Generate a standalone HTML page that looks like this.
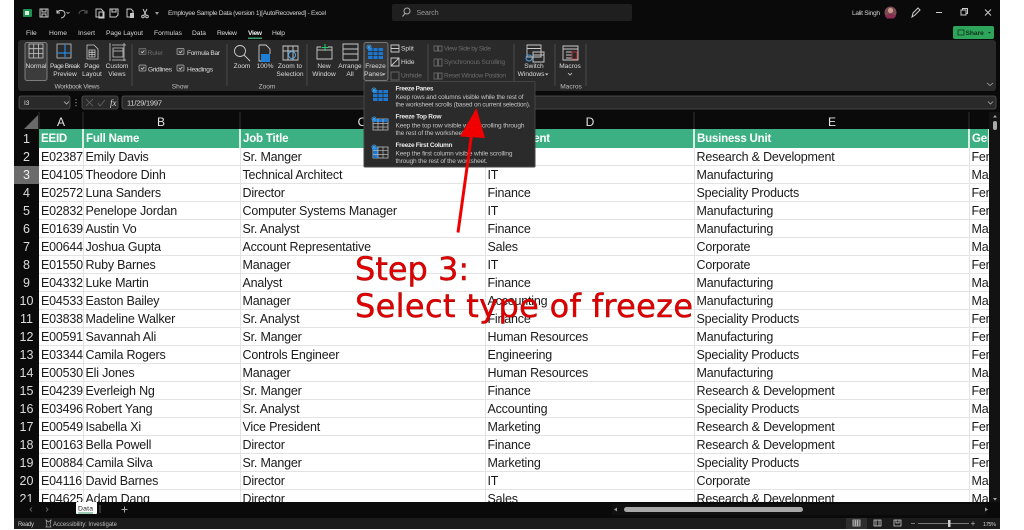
<!DOCTYPE html>
<html><head><meta charset="utf-8"><style>
html,body{margin:0;padding:0;background:#fff;width:1024px;height:530px;overflow:hidden}
#win{position:absolute;left:14px;top:0;width:986px;height:529px;background:#0a0a0a}
#grid{position:absolute;left:14px;top:129px;width:975px;height:373px;overflow:hidden;background:#fff}
table{border-collapse:collapse;table-layout:fixed;width:975px;font:12.5px "Liberation Sans",sans-serif;letter-spacing:-.2px;color:#1a1a1a}
td{height:16px;padding:1px 0 0 2px;border-right:1px solid #e3e3e3;border-bottom:1px solid #e3e3e3;white-space:nowrap;overflow:hidden;line-height:16px;box-sizing:content-box}
td:first-child{background:#0a0a0a;color:#ddd;text-align:center;padding:1px 0 0;border:0;letter-spacing:0}
tr.h td{height:18px;background:#3cb083;color:#fff;font-weight:bold;font-size:11.5px;border-right:2px solid #d8efe6;border-bottom:0}
tr.h td:first-child{background:#0a0a0a;color:#ddd;font-weight:normal;font-size:12.5px;border:0}
tr.s td:first-child{background:#6b6b6b;color:#eee}
svg{position:absolute;left:0;top:0}
text{font-family:"Liberation Sans",sans-serif}
</style></head><body>
<div id="win"></div>
<div id="grid"><table>
<colgroup><col style="width:25px"><col style="width:44px"><col style="width:157px"><col style="width:245px"><col style="width:209px"><col style="width:275px"><col style="width:20px"></colgroup>
<tr class="h"><td>1</td><td>EEID</td><td>Full Name</td><td>Job Title</td><td>Department</td><td>Business Unit</td><td>Gender</td></tr>
<tr><td>2</td><td>E02387</td><td>Emily Davis</td><td>Sr. Manger</td><td>IT</td><td>Research &amp; Development</td><td>Female</td></tr>
<tr class="s"><td>3</td><td>E04105</td><td>Theodore Dinh</td><td>Technical Architect</td><td>IT</td><td>Manufacturing</td><td>Male</td></tr>
<tr><td>4</td><td>E02572</td><td>Luna Sanders</td><td>Director</td><td>Finance</td><td>Speciality Products</td><td>Female</td></tr>
<tr><td>5</td><td>E02832</td><td>Penelope Jordan</td><td>Computer Systems Manager</td><td>IT</td><td>Manufacturing</td><td>Female</td></tr>
<tr><td>6</td><td>E01639</td><td>Austin Vo</td><td>Sr. Analyst</td><td>Finance</td><td>Manufacturing</td><td>Male</td></tr>
<tr><td>7</td><td>E00644</td><td>Joshua Gupta</td><td>Account Representative</td><td>Sales</td><td>Corporate</td><td>Male</td></tr>
<tr><td>8</td><td>E01550</td><td>Ruby Barnes</td><td>Manager</td><td>IT</td><td>Corporate</td><td>Female</td></tr>
<tr><td>9</td><td>E04332</td><td>Luke Martin</td><td>Analyst</td><td>Finance</td><td>Manufacturing</td><td>Male</td></tr>
<tr><td>10</td><td>E04533</td><td>Easton Bailey</td><td>Manager</td><td>Accounting</td><td>Manufacturing</td><td>Male</td></tr>
<tr><td>11</td><td>E03838</td><td>Madeline Walker</td><td>Sr. Analyst</td><td>Finance</td><td>Speciality Products</td><td>Female</td></tr>
<tr><td>12</td><td>E00591</td><td>Savannah Ali</td><td>Sr. Manger</td><td>Human Resources</td><td>Manufacturing</td><td>Female</td></tr>
<tr><td>13</td><td>E03344</td><td>Camila Rogers</td><td>Controls Engineer</td><td>Engineering</td><td>Speciality Products</td><td>Female</td></tr>
<tr><td>14</td><td>E00530</td><td>Eli Jones</td><td>Manager</td><td>Human Resources</td><td>Manufacturing</td><td>Male</td></tr>
<tr><td>15</td><td>E04239</td><td>Everleigh Ng</td><td>Sr. Manger</td><td>Finance</td><td>Research &amp; Development</td><td>Female</td></tr>
<tr><td>16</td><td>E03496</td><td>Robert Yang</td><td>Sr. Analyst</td><td>Accounting</td><td>Speciality Products</td><td>Male</td></tr>
<tr><td>17</td><td>E00549</td><td>Isabella Xi</td><td>Vice President</td><td>Marketing</td><td>Research &amp; Development</td><td>Female</td></tr>
<tr><td>18</td><td>E00163</td><td>Bella Powell</td><td>Director</td><td>Finance</td><td>Research &amp; Development</td><td>Female</td></tr>
<tr><td>19</td><td>E00884</td><td>Camila Silva</td><td>Sr. Manger</td><td>Marketing</td><td>Speciality Products</td><td>Female</td></tr>
<tr><td>20</td><td>E04116</td><td>David Barnes</td><td>Director</td><td>IT</td><td>Corporate</td><td>Male</td></tr>
<tr><td>21</td><td>E04625</td><td>Adam Dang</td><td>Director</td><td>Sales</td><td>Research &amp; Development</td><td>Male</td></tr>
</table></div>

<svg width="1024" height="530" viewBox="0 0 1024 530">
<!-- title bar -->
<rect x="23" y="9" width="9" height="8" rx="1" fill="#1f8f52"/><rect x="25" y="11" width="4" height="4" fill="#d8f0e0"/>
<g fill="none" stroke="#c8c8c8" stroke-width="1">
<rect x="40" y="9" width="8" height="8"/><path d="M42 9v3h4V9M42 17v-3h4v3"/>
<path d="M57 10v3h3M57 13c2-4 8-3 8 1 0 2-2 4-4 4" />
<path d="M66.500 12l1.500 1.500L69.500 12" stroke-width=".7"/>
<path d="M87 10v3h-3M87 13c-2-4-8-3-8 1" stroke="#555"/>
<path d="M96 9h5l2 2v6h-7z M99 12h5v6h-5z"/>
<path d="M110 9h8v6l-2 2h-6z M112 9v3h4V9"/>
<path d="M127 9h4l2 2v6h-6z"/><rect x="130" y="13" width="4" height="5" fill="#c8c8c8" stroke="none"/>
<path d="M143 9l3 6M147 9l-3 6"/><circle cx="143" cy="16.500" r="1.300"/><circle cx="147" cy="16.500" r="1.300"/>
</g>
<path d="M155 12h4l-2 3z" fill="#999"/>
<text x="168" y="15" font-size="6.600" fill="#d2d2d2" textLength="158">Employee Sample Data (version 1)[AutoRecovered]  -  Excel</text>
<rect x="392" y="4" width="240" height="17" rx="2" fill="#1f1f1f"/>
<circle cx="407" cy="11" r="3" fill="none" stroke="#aaa"/><path d="M405 13.500l-2.500 3" stroke="#aaa"/>
<text x="416.500" y="15" font-size="7" fill="#9a9a9a">Search</text>
<text x="852" y="15" font-size="6.600" fill="#d2d2d2" textLength="28">Lalit Singh</text>
<circle cx="890.500" cy="12.500" r="6" fill="#7c4a52"/><circle cx="890.500" cy="10.500" r="2.600" fill="#c79c8c"/><path d="M885 16q5.500-4 11 0l-2 2.500h-7z" fill="#8a2c50"/>
<path d="M912 17l1-4 5-5 2 2-5 5-3 2z" fill="none" stroke="#ccc"/>
<path d="M936 12.500h6" stroke="#ccc"/>
<path d="M961 10h5v5h-5zM962.500 10V8.500h5v5H966" fill="none" stroke="#ccc"/>
<path d="M985 9.500l6 6M991 9.500l-6 6" stroke="#ccc" stroke-width="1"/>
<!-- tabs -->
<g font-size="6.700" fill="#d6d6d6">
<text x="26" y="35">File</text><text x="49" y="35" textLength="18">Home</text><text x="78" y="35" textLength="17">Insert</text>
<text x="106" y="35" textLength="37">Page Layout</text><text x="154" y="35" textLength="28">Formulas</text><text x="192" y="35" textLength="14">Data</text>
<text x="217" y="35" textLength="20">Review</text><text x="248" y="35" textLength="14" font-weight="bold" fill="#eee">View</text><text x="272" y="35" textLength="13">Help</text>
</g>
<rect x="248" y="37.500" width="14" height="1.500" fill="#3a9a6a"/>
<rect x="953" y="26" width="41" height="13" rx="2" fill="#2ea55a"/>
<rect x="958" y="30" width="6" height="5" fill="none" stroke="#0e3a20" stroke-width=".8"/>
<text x="965.500" y="35" font-size="6.600" fill="#0e2e1c" font-weight="bold">Share</text>
<path d="M988 32h3l-1.500 1.500z" fill="#0e2e1c"/>
<!-- ribbon -->
<rect x="18" y="40" width="978" height="51" rx="3" fill="#2a2a2a"/>
<rect x="25" y="42.500" width="22" height="38" rx="2" fill="#3c3c3c" stroke="#7e7e7e"/>
<rect x="364" y="42.500" width="24" height="38" rx="2" fill="#383838" stroke="#777"/>
<g stroke="#4a4a4a" stroke-width="1"><path d="M132 44v42M227 44v42M307 44v42M428 44v42M514 44v42M555 44v42M586 44v42"/></g>
<g fill="none" stroke="#c9c9c9" stroke-width=".8">
<path d="M29 44h14v14H29zM29 48.700h14M29 53.400h14M33.700 44v14M38.400 44v14"/>
<path d="M57 44h14v14H57z" />
<path d="M87 45h7l4 4v10H87z M89 50h6v7h-6zM89 52.300h6M89 54.600h6M92 50v7"/>
<path d="M110 43v18M124 43v18M112 45h14M112 60h14M113 48h10v9h-10zM113 51h10"/>
</g>
<path d="M57 53h14M65 44v14" stroke="#2b87d8" stroke-width="1.200"/>
<g font-size="6.600" fill="#dcdcdc" text-anchor="middle">
<text x="36" y="68" textLength="21">Normal</text>
<text x="65" y="68" textLength="30">Page Break</text><text x="65" y="76">Preview</text>
<text x="92" y="68">Page</text><text x="92" y="76">Layout</text>
<text x="117" y="68">Custom</text><text x="117" y="76">Views</text>
<text x="77" y="88.500" textLength="45" fill="#bdbdbd">Workbook Views</text>
<text x="180" y="88.500" fill="#bdbdbd">Show</text>
<text x="242" y="68">Zoom</text><text x="265" y="68">100%</text>
<text x="290" y="68">Zoom to</text><text x="290" y="76">Selection</text>
<text x="267" y="88.500" fill="#bdbdbd">Zoom</text>
<text x="324" y="68">New</text><text x="324" y="76">Window</text>
<text x="350" y="68">Arrange</text><text x="350" y="76">All</text>
<text x="375.500" y="68">Freeze</text><text x="373.500" y="76">Panes</text>
<text x="534" y="68">Switch</text><text x="531" y="76">Windows</text>
<text x="570" y="68">Macros</text>
<text x="571" y="88.500" fill="#bdbdbd">Macros</text>
</g>
<path d="M382 73.500h3.500l-1.750 2z M545 73.500h3.500l-1.750 2z" fill="#ccc"/>
<path d="M568 73l2 2 2-2" fill="none" stroke="#ccc" stroke-width=".8"/>
<!-- checkboxes -->
<g fill="#3a3a3a" stroke="#777" stroke-width=".7">
<rect x="139" y="48.500" width="7" height="6" rx="1"/><rect x="177" y="48.500" width="7" height="6" rx="1" stroke="#aaa"/>
<rect x="139" y="65" width="7" height="6" rx="1" stroke="#aaa"/><rect x="177" y="65" width="7" height="6" rx="1" stroke="#aaa"/>
</g>
<path d="M141 51.500l1.300 1.300 2-2.300M179 51.500l1.300 1.300 2-2.300M141 68l1.300 1.300 2-2.300M179 68l1.300 1.300 2-2.300" fill="none" stroke="#ddd" stroke-width=".7"/>
<g font-size="6.600" fill="#dcdcdc">
<text x="147.500" y="55" fill="#6e6e6e">Ruler</text><text x="187" y="55" textLength="33">Formula Bar</text>
<text x="148" y="71.500" textLength="24">Gridlines</text><text x="187" y="71.500" textLength="26">Headings</text>
<text x="401" y="50.500">Split</text><text x="401" y="64">Hide</text><text x="401" y="77.500" fill="#777">Unhide</text>
<g fill="#6a6a6a"><text x="444" y="50.500" textLength="47">View Side by Side</text><text x="444" y="64" textLength="61">Synchronous Scrolling</text><text x="444" y="77.500" textLength="62">Reset Window Position</text></g>
</g>
<!-- zoom icons -->
<g fill="none" stroke="#c9c9c9" stroke-width=".9">
<circle cx="240" cy="51" r="5.500"/><path d="M244 55l6 6"/>
<path d="M259 45h7l4 4v5M259 45v16h2"/>
<path d="M283 46h15v14h-15zM283 51h15M288 46v14M293 46v14"/>
<path d="M321 47h-4v12h15V47h-4" /><path d="M317 50h15"/>
<path d="M343 44h15v5h-15zM343 49h15v5h-15zM343 54h15v6h-15z"/>
<path d="M391 45h8v7h-8zM391 48.500h8"/><path d="M391 58h8v8h-8zM391 66l8-8"/><path d="M391 72h8v8h-8z" stroke="#666"/>
<path d="M434 46h3.500v5H434zM438.500 46h3.500v5h-3.500z" stroke="#666"/><path d="M434 59h3.500v7H434zM438.500 59h3.500v7h-3.500z" stroke="#666"/><path d="M434 73h3.500v6H434zM438.500 73h3.500v6h-3.500z" stroke="#666"/>
<path d="M527 45h14v12h-14zM527 48.500h14M533 52h11v10h-11zM533 55h11"/>
<path d="M563 46h15v14h-15zM563 49h15M566 52h6M566 55h6M566 58h6"/>
</g>
<rect x="261" y="54" width="9" height="8" fill="#1f7fd6"/><circle cx="292" cy="55" r="3.500" fill="none" stroke="#4ea3e6"/>
<path d="M325 44v7M321.500 47.500h7" stroke="#2ecc71" stroke-width="1"/>
<rect x="572" y="52" width="5" height="7" fill="none" stroke="#b03030"/>
<circle cx="529" cy="58" r="3" fill="none" stroke="#4ea3e6"/>
<path d="M987 83l3 2.500 3-2.500" fill="none" stroke="#aaa" stroke-width=".8"/>
<!-- freeze icon -->
<g id="fz">
<rect x="368" y="48" width="15" height="11" fill="#1e78d0"/><path d="M368 51.700h15M368 55.400h15M373 48v11M378 48v11" stroke="#2a2a2a" stroke-width=".8"/>
<path d="M369 44v6M366 47h6M367 45l4 4M371 45l-4 4" stroke="#39a0f0" stroke-width=".7"/>
</g>
<!-- formula bar -->
<g fill="#2a2a2a" stroke="#555" stroke-width=".8">
<rect x="19" y="96" width="51" height="13" rx="2"/><rect x="82" y="96" width="36" height="13" rx="2"/><rect x="122" y="96" width="874" height="13" rx="2"/>
</g>
<text x="24" y="105" font-size="6.500" fill="#ddd">I3</text>
<path d="M64 101.500l2.500 2.500 2.500-2.500" fill="none" stroke="#bbb" stroke-width=".8"/>
<path d="M76 99v1.300M76 102v1.300M76 105v1.300" stroke="#999"/>
<path d="M86 99l7 7M93 99l-7 7M98 103l2 3 5-6" fill="none" stroke="#666" stroke-width=".8"/>
<text x="110" y="106" font-size="9" fill="#ddd" font-style="italic" style="font-family:'Liberation Serif',serif">fx</text>
<text x="127" y="105.500" font-size="7.500" fill="#ddd" textLength="35">11/29/1997</text>
<path d="M988 101.500l2.500 2.500 2.500-2.500" fill="none" stroke="#aaa" stroke-width=".8"/>
<!-- col headers -->
<rect x="14" y="112" width="975" height="17" fill="#0a0a0a"/>
<path d="M38 115v14H24z" fill="#6a6a6a"/>
<g stroke="#333" stroke-width="1"><path d="M39 112v17M83 112v17M240 112v17M485 112v17M694 112v17M969 112v17"/></g>
<g font-size="12" fill="#e2e2e2" text-anchor="middle">
<text x="61" y="126">A</text><text x="161" y="126">B</text><text x="362" y="126">C</text><text x="590" y="126">D</text><text x="832" y="126">E</text>
</g>
<!-- scrollbars -->
<rect x="989" y="112" width="11" height="390" fill="#121212"/>
<rect x="993" y="121" width="4" height="9" rx="2" fill="#aaa"/>
<path d="M995 115l2 2.500h-4z M995 500.500l2-2.500h-4z" fill="#aaa"/>
<rect x="14" y="502" width="986" height="16" fill="#0a0a0a"/>
<rect x="76" y="502" width="21" height="12" rx="1" fill="#fff"/>
<text x="78" y="510.500" font-size="6.800" fill="#222" textLength="15">Data</text>
<rect x="78" y="512.500" width="15" height="1" fill="#3a9a6a"/>
<path d="M32 507.500l-2 2 2 2M46 507.500l2 2-2 2" fill="none" stroke="#777" stroke-width=".8"/>
<path d="M100 505v8" stroke="#555"/>
<path d="M124.500 506.500v6M121.500 509.500h6" stroke="#aaa"/>
<rect x="612" y="504" width="375" height="11" fill="#101010"/>
<rect x="624" y="507" width="179" height="5" rx="2.500" fill="#a8a8a8"/>
<path d="M985 507.500l3 2-3 2z M614 509.500l3-2v4z" fill="#999"/>
<!-- status bar -->
<rect x="14" y="518" width="986" height="11" fill="#1b1b1b"/>
<rect x="846" y="518" width="21" height="11" fill="#2e2e2e"/>
<text x="18" y="526" font-size="6" fill="#ccc" textLength="16">Ready</text>
<path d="M46 520l2.500 2 2.500-2-1 5 1 2h-5l1-2z" fill="none" stroke="#aaa" stroke-width=".7"/>
<text x="53" y="526" font-size="6" fill="#bbb" textLength="64">Accessibility: Investigate</text>
<g fill="none" stroke="#ccc" stroke-width=".8">
<path d="M853 520h7v6h-7zM853 522h7M853 524h7M855.300 520v6M857.600 520v6"/>
<path d="M874 520h7v6h-7zM876 520v6M879 520v6"/>
<path d="M894 520h7v6h-7zM896 520v3h3v-3"/>
</g>
<path d="M911 523.500h4M918 523.500h51M971 523.500h4M973 521.500v4" stroke="#999" stroke-width=".8"/>
<rect x="948" y="520" width="2.500" height="7" fill="#ccc"/>
<text x="983" y="526" font-size="5.500" fill="#ccc" textLength="13">175%</text>
<!-- menu -->
<rect x="364" y="81.500" width="171" height="85.500" rx="1" fill="#2b2b2b" stroke="#444"/>
<g>
<rect x="373" y="90" width="15" height="11" fill="#1e78d0"/><path d="M373 93.700h15M373 97.400h15M378 90v11M383 90v11" stroke="#2b2b2b" stroke-width=".8"/>
<path d="M374 87v6M371 90h6M372 88l4 4M376 88l-4 4" stroke="#39a0f0" stroke-width=".7"/>
<rect x="373" y="119" width="15" height="11" fill="none" stroke="#bbb" stroke-width=".8"/><rect x="373" y="119" width="15" height="3" fill="#1e78d0"/><path d="M373 123.500h15M373 127h15M378 119v11M383 119v11" stroke="#bbb" stroke-width=".7"/>
<path d="M374 116v6M371 119h6M372 117l4 4M376 117l-4 4" stroke="#39a0f0" stroke-width=".7"/>
<rect x="373" y="147" width="15" height="11" fill="none" stroke="#bbb" stroke-width=".8"/><rect x="373" y="147" width="5" height="11" fill="#1e78d0"/><path d="M373 150.700h15M373 154.400h15M378 147v11M383 147v11" stroke="#bbb" stroke-width=".7"/>
<path d="M374 144v6M371 147h6M372 145l4 4M376 145l-4 4" stroke="#39a0f0" stroke-width=".7"/>
</g>
<g font-size="6.500" fill="#e8e8e8" font-weight="bold">
<text x="395.500" y="90.500" textLength="38">Freeze Panes</text><text x="395.500" y="118.700" textLength="46">Freeze Top Row</text><text x="395.500" y="147" textLength="57">Freeze First Column</text>
</g>
<g font-size="6.500" fill="#c4c4c4">
<text x="395.500" y="99" textLength="128">Keep rows and columns visible while the rest of</text>
<text x="395.500" y="106.500" textLength="135">the worksheet scrolls (based on current selection).</text>
<text x="395.500" y="127.500" textLength="129">Keep the top row visible while scrolling through</text>
<text x="395.500" y="135" textLength="70">the rest of the worksheet.</text>
<text x="395.500" y="155.700" textLength="117">Keep the first column visible while scrolling</text>
<text x="395.500" y="163.200" textLength="92">through the rest of the worksheet.</text>
</g>
<!-- annotation -->
<path d="M458 232.500L471.500 135" stroke="#f00000" stroke-width="3" fill="none"/>
<path d="M476.500 108L460 136.500 485 138z" fill="#f00000"/>
<g style="paint-order:stroke" stroke="#5a0000" stroke-width=".4" fill="#e00000" font-size="32">
<text x="355" y="280" style="font-family:'DejaVu Sans',sans-serif">Step 3:</text>
<text x="355" y="317" textLength="338" style="font-family:'DejaVu Sans',sans-serif">Select type of freeze</text>
</g>
</svg>
</body></html>
